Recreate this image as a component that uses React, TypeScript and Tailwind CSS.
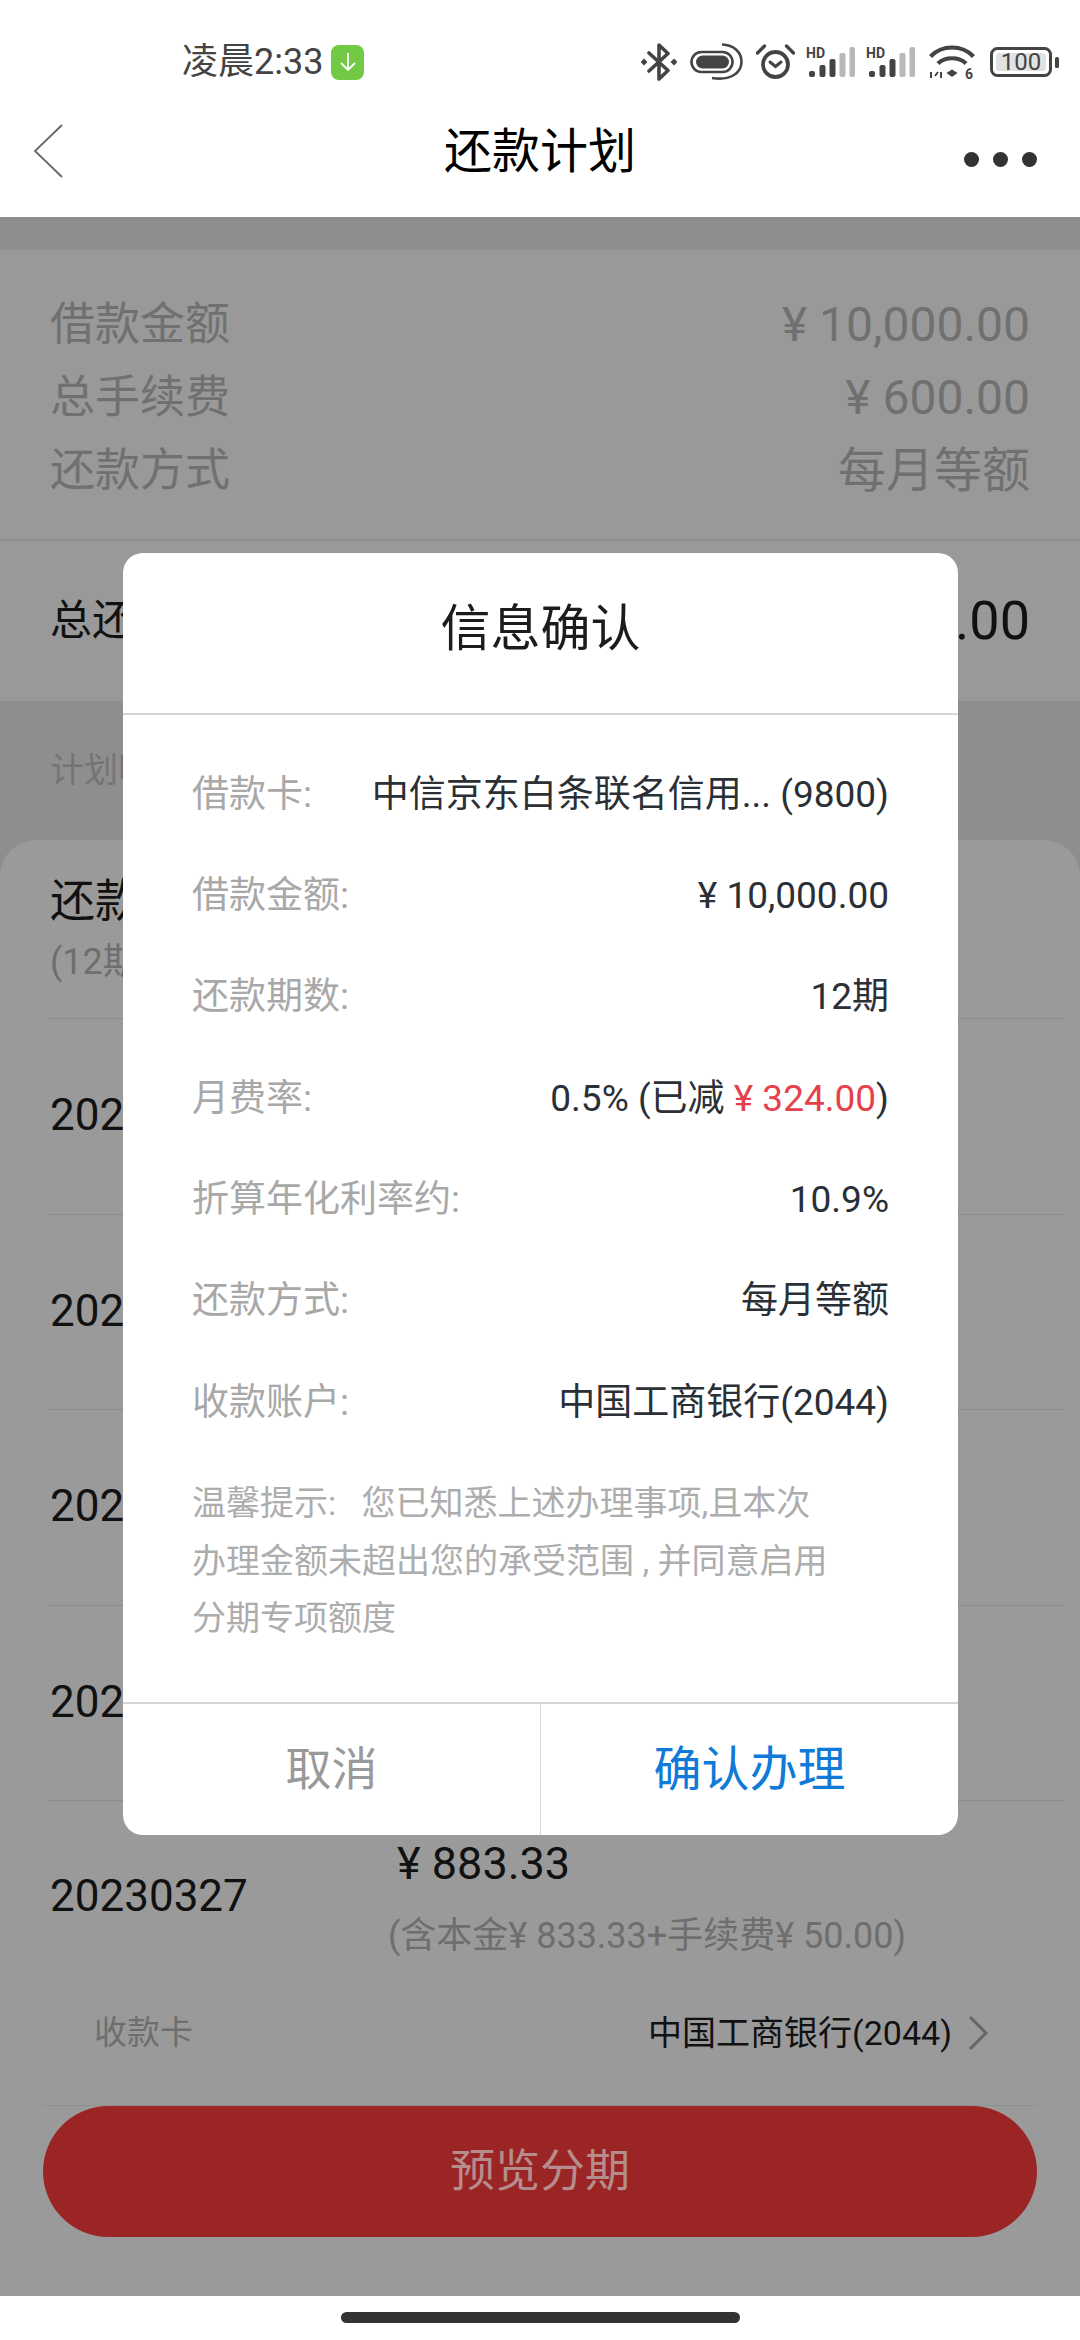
import React from "react";

const ink = "#444444";

function Bluetooth() {
  return (
    <svg width="36" height="38" viewBox="0 0 36 38" fill="none">
      <path d="M8 10 L27 27.5 L18 36 V2 L27 10.5 L8 28" stroke={ink} strokeWidth="3.6" strokeLinejoin="round" strokeLinecap="round" />
      <path d="M3 15.5 L6.5 19 L3 22.5 L-0.5 19Z M33 15.5 L36.5 19 L33 22.5 L29.5 19Z" fill={ink} />
    </svg>
  );
}

function Earbuds() {
  return (
    <svg width="53" height="38" viewBox="0 0 53 38" fill="none">
      <rect x="1.5" y="9" width="41" height="20" rx="10" stroke={ink} strokeWidth="2.6" />
      <rect x="6" y="12.5" width="33" height="13" rx="6.5" fill={ink} />
      <path d="M32 1.5 C44 2 51.5 9 51.5 19 C51.5 30 40 38 22 35" stroke={ink} strokeWidth="2.6" />
    </svg>
  );
}

function Alarm() {
  return (
    <svg width="39" height="36" viewBox="0 0 39 36" fill="none">
      <circle cx="19.5" cy="20.5" r="12.5" stroke={ink} strokeWidth="3.8" />
      <path d="M14 18 L19.5 22.5 L25 18" stroke={ink} strokeWidth="3" strokeLinecap="round" />
      <path d="M1.5 9 L8.5 2 M30.5 2 L37.5 9" stroke={ink} strokeWidth="3.4" strokeLinecap="round" />
    </svg>
  );
}

function Signal() {
  return (
    <svg width="49" height="30" viewBox="0 0 49 30">
      <text x="0" y="11" fontSize="14" fontWeight="700" fill={ink}>HD</text>
      <rect x="3" y="24" width="6" height="6" rx="2" fill={ink} />
      <rect x="13.5" y="18" width="6" height="12" rx="2" fill={ink} />
      <rect x="23.5" y="12" width="6" height="18" rx="2" fill={ink} />
      <rect x="33.5" y="6" width="6" height="24" rx="2" fill="#b8b8b8" />
      <rect x="43.5" y="0" width="5.5" height="30" rx="2" fill="#b8b8b8" />
    </svg>
  );
}

function Wifi() {
  return (
    <svg width="46" height="34" viewBox="0 0 46 34" fill="none">
      <path d="M1.5 11.5 C13 -0.5 33 -0.5 44.5 11.5" stroke={ink} strokeWidth="4.2" />
      <path d="M9 18.5 C16 11.5 30 11.5 37 18.5" stroke={ink} strokeWidth="4.2" />
      <path d="M23 24.5 L28.5 28 L23 32 L17.5 28Z" fill={ink} />
      <path d="M2 27 V33 M6 31 L9 27 M12 27 V33" stroke={ink} strokeWidth="2" />
      <text x="36" y="33.5" fontSize="14" fontWeight="700" fill={ink}>6</text>
    </svg>
  );
}

function Battery() {
  return (
    <svg width="70" height="30" viewBox="0 0 70 30">
      <rect x="1.5" y="1.5" width="59" height="27" rx="6" fill="none" stroke={ink} strokeWidth="3" />
      <rect x="6" y="6" width="50" height="18" rx="3" fill="#e2e2e2" />
      <text x="31" y="23" fontSize="24" textAnchor="middle" fill={ink}>100</text>
      <rect x="65" y="10" width="4" height="11" rx="1.5" fill={ink} />
    </svg>
  );
}

function StatusBar() {
  return (
    <div className="h-[100px] pt-[43px] flex items-start">
      <div className="h-[38px] ml-[182px] flex items-center">
        <span className="text-[36px] leading-[38px] text-[#444444]">凌晨2:33</span>
        <div className="ml-[8px] w-[33px] h-[35px] rounded-[8px] bg-[#72c943] flex items-center justify-center">
          <svg width="20" height="22" viewBox="0 0 20 22" fill="none">
            <path d="M10 2 V19 M3 12 L10 19 L17 12" stroke="#ffffff" strokeWidth="1.8" />
          </svg>
        </div>
      </div>
      <div className="h-[38px] ml-[277px] flex items-center">
        <Bluetooth />
        <div className="ml-[13px]"><Earbuds /></div>
        <div className="ml-[13px]"><Alarm /></div>
        <div className="ml-[11px]"><Signal /></div>
        <div className="ml-[11px]"><Signal /></div>
        <div className="ml-[14px]"><Wifi /></div>
        <div className="ml-[15px]"><Battery /></div>
      </div>
    </div>
  );
}

function NavBar() {
  return (
    <div className="relative h-[117px] flex items-center justify-between pl-[33px] pr-[43px]">
      <svg width="30" height="54" viewBox="0 0 30 54" fill="none" className="mb-[16px]">
        <path d="M29 1 L2 27 L29 53" stroke="#666666" strokeWidth="1.8" />
      </svg>
      <div className="absolute left-0 right-0 top-[23px] text-center text-[48px] leading-[58px] text-black">还款计划</div>
      <div className="flex gap-[14px] mt-[2px]">
        <div className="w-[15px] h-[15px] rounded-full bg-[#333333]" />
        <div className="w-[15px] h-[15px] rounded-full bg-[#333333]" />
        <div className="w-[15px] h-[15px] rounded-full bg-[#333333]" />
      </div>
    </div>
  );
}

function SummaryRow({ label, value }: { label: string; value: string }) {
  return (
    <div className="h-[73px] flex items-center justify-between text-[#707070]">
      <span className="text-[45px] leading-[73px]">{label}</span>
      <span className="text-[48px] leading-[73px]">{value}</span>
    </div>
  );
}

function PlanRow({ date, amount, sub }: { date: string; amount: string; sub: string }) {
  return (
    <div className="h-[195.5px] flex items-center border-b border-[#8b8b8b] overflow-hidden">
      <div className="w-[340px] pl-[2px] mb-[2px] text-[44px] leading-[52px] text-[#111111]">{date}</div>
      <div className="mt-[8px]">
        <div className="pl-[9px] text-[45px] leading-[50px] text-[#111111]">{amount}</div>
        <div className="mt-[22px] text-[36px] leading-[50px] whitespace-nowrap text-[#6e6e6e]">{sub}</div>
      </div>
    </div>
  );
}

function InfoRow({ label, children }: { label: string; children: React.ReactNode }) {
  return (
    <div className="h-[101.3px] flex items-center justify-between">
      <span className="text-[37px] text-[#a8a8a8] whitespace-nowrap">{label}</span>
      <span className="text-[37px] text-[#2b2f36] whitespace-nowrap">{children}</span>
    </div>
  );
}

function Modal() {
  return (
    <div className="absolute left-[123px] top-[553px] w-[835px] h-[1282px] rounded-[20px] bg-white flex flex-col overflow-hidden">
      <div className="h-[162px] pb-[8px] flex items-center justify-center border-b-2 border-[#d6d6d6] text-[50px] text-[#1c1c1c]">信息确认</div>
      <div className="flex-1 px-[69px] pt-[29px]">
        <InfoRow label="借款卡:">中信京东白条联名信用... (9800)</InfoRow>
        <InfoRow label="借款金额:">¥ 10,000.00</InfoRow>
        <InfoRow label="还款期数:">12期</InfoRow>
        <InfoRow label="月费率:">
          0.5% (已减 <span className="text-[#e5414b]">¥ 324.00</span>)
        </InfoRow>
        <InfoRow label="折算年化利率约:">10.9%</InfoRow>
        <InfoRow label="还款方式:">每月等额</InfoRow>
        <InfoRow label="收款账户:">中国工商银行(2044)</InfoRow>
        <div className="mt-[22px] text-[34px] leading-[57.5px] text-[#adadad] whitespace-pre">
          <div>温馨提示:   您已知悉上述办理事项,且本次</div>
          <div>办理金额未超出您的承受范围 , 并同意启用</div>
          <div>分期专项额度</div>
        </div>
      </div>
      <div className="h-[133px] flex border-t-2 border-[#d6d6d6]">
        <div className="w-[417px] flex items-center justify-center text-[46px] text-[#999999]">取消</div>
        <div className="flex-1 flex items-center justify-center border-l border-[#d6d6d6] text-[48px] text-[#0f7ad8]">确认办理</div>
      </div>
    </div>
  );
}

export default function App() {
  const sub = "(含本金¥ 833.33+手续费¥ 50.00)";
  return (
    <div className="relative w-[1080px] h-[2340px] overflow-hidden bg-white flex flex-col [font-family:Roboto,'Noto_Sans_CJK_SC',sans-serif]">
      <StatusBar />
      <NavBar />
      <div className="h-[2079px] bg-[#8e8e8e] pt-[33px] flex flex-col">
        <div className="bg-[#999999] h-[451px] flex flex-col">
          <div className="h-[291px] px-[50px] pt-[38px] border-b-2 border-[#8c8c8c]">
            <SummaryRow label="借款金额" value="¥ 10,000.00" />
            <SummaryRow label="总手续费" value="¥ 600.00" />
            <SummaryRow label="还款方式" value="每月等额" />
          </div>
          <div className="flex-1 px-[50px] pb-[2px] flex items-center justify-between text-[#111111]">
            <span className="text-[42px]">总还款金额</span>
            <span className="text-[54px]">¥ 10,600.00</span>
          </div>
        </div>
        <div className="h-[139px] px-[50px] flex items-center text-[34px] text-[#747474]">计划明细</div>
        <div className="flex-1 rounded-t-[36px] bg-[#9a9a9a] flex flex-col">
          <div className="ml-[48px] mr-[16px]">
            <div className="h-[179px] pt-[36px] pl-[2px] border-b border-[#8b8b8b]">
              <div className="text-[45px] leading-[52px] text-[#111111]">还款计划</div>
              <div className="mt-[9px] text-[36px] leading-[50px] text-[#6e6e6e]">(12期)</div>
            </div>
            <PlanRow date="20221227" amount="¥ 883.33" sub={sub} />
            <PlanRow date="20230127" amount="¥ 883.33" sub={sub} />
            <PlanRow date="20230227" amount="¥ 883.33" sub={sub} />
            <PlanRow date="20230227" amount="¥ 883.33" sub={sub} />
            <div className="h-[190px] flex items-center">
              <div className="w-[340px] pl-[2px] text-[44px] leading-[52px] text-[#111111]">20230327</div>
              <div className="mt-[8px]">
                <div className="pl-[9px] text-[45px] leading-[50px] text-[#111111]">¥ 883.33</div>
                <div className="mt-[22px] text-[36px] leading-[50px] whitespace-nowrap text-[#6e6e6e]">{sub}</div>
              </div>
            </div>
          </div>
          <div className="ml-[43px] w-[993px] h-[115px] pb-[30px] pl-[51px] pr-[48px] flex items-center justify-between border-b border-[#8f8f8f]">
            <span className="text-[33px] text-[#6e6e6e]">收款卡</span>
            <span className="flex items-center gap-[16px] text-[34px] text-[#111111]">
              中国工商银行(2044)
              <svg width="20" height="34" viewBox="0 0 20 34" fill="none">
                <path d="M2 1 L18 17 L2 33" stroke="#666666" strokeWidth="3" />
              </svg>
            </span>
          </div>
          <div className="mx-[43px] h-[131px] rounded-full bg-[#9b2424] flex items-center justify-center text-[45px] text-[#b58d8d]">预览分期</div>
        </div>
      </div>
      <div className="flex-1 pt-[16px] flex justify-center items-start">
        <div className="w-[399px] h-[11px] rounded-full bg-[#333333]" />
      </div>
      <Modal />
    </div>
  );
}
